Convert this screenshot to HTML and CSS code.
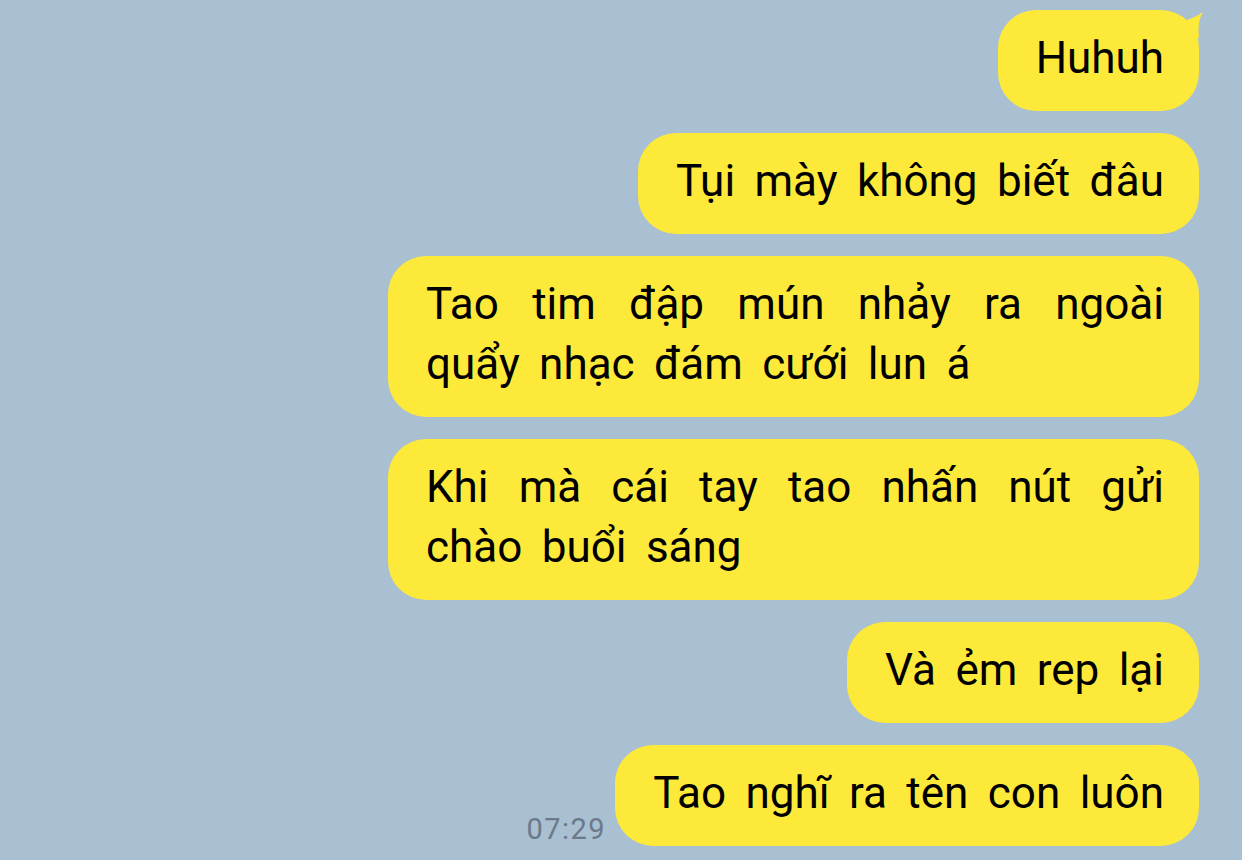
FILE: index.html
```html
<!DOCTYPE html>
<html>
<head>
    <link rel="stylesheet" href="styles.css">
</head>
<body>

<div class="chat">
  <div class="row">
    <div class="bubble first">
      Huhuh
      <svg class="tail" width="26" height="30" viewBox="0 0 26 30">
        <path d="M4 13 Q15 11 25 4 Q19 13 21 30 L4 30 Z" fill="#fde93a"/>
      </svg>
    </div>
  </div>
  <div class="row">
    <div class="bubble">Tụi mày không biết đâu</div>
  </div>
  <div class="row">
    <div class="bubble">Tao tim đập mún nhảy ra ngoài quẩy nhạc đám cưới lun á</div>
  </div>
  <div class="row">
    <div class="bubble">Khi mà cái tay tao nhấn nút gửi chào buổi sáng</div>
  </div>
  <div class="row">
    <div class="bubble">Và ẻm rep lại</div>
  </div>
  <div class="row">
    <span class="time">07:29</span>
    <div class="bubble">Tao nghĩ ra tên con luôn</div>
  </div>
</div>

</body>
</html>
```

FILE: styles.css
```css
* {box-sizing: border-box}

body {
  margin: 0;
  background: #a9bfd2;
  font-family: Roboto, "Noto Sans", sans-serif;
  height: 860px;
  overflow: hidden;
}

.chat {
  display: flex;
  flex-direction: column;
  gap: 22px;
  padding: 10px 43px 0 0;
}

.row {
  display: flex;
  justify-content: flex-end;
  align-items: flex-end;
  gap: 9px;
}

.bubble {
  position: relative;
  max-width: 811px;
  background: #fde93a;
  color: #000;
  font-size: 44px;
  line-height: 60px;
  word-spacing: 8.5px;
  padding: 18px 35px 23px 38px;
  border-radius: 38px;
  text-align: justify;
}

.tail {
  position: absolute;
  top: -2px;
  right: -5px;
}

.time {
  font-size: 29px;
  letter-spacing: 1.5px;
  color: #6b7a89;
}
```
